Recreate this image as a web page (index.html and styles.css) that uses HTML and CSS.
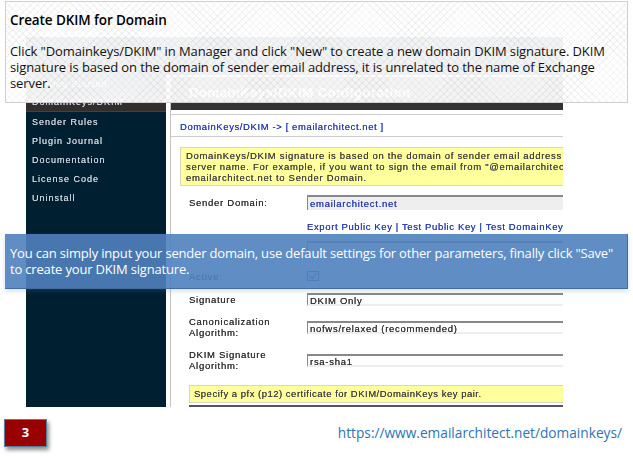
FILE: index.html
```html
<!DOCTYPE html>
<html lang="en">
<head>
<meta charset="utf-8">
<title>Create DKIM for Domain</title>
<link rel="stylesheet" href="styles.css">
</head>
<body>
<div class="stage">
  <div class="shot-wrap">
    <div class="shot">
      <div class="banner"></div>
      <div class="shot-body">
        <nav class="side">
          <div class="side-item side-faint">Getting Started</div>
          <div class="side-item side-active">DomainKeys/DKIM</div>
          <div class="side-item">Sender Rules</div>
          <div class="side-item">Plugin Journal</div>
          <div class="side-item">Documentation</div>
          <div class="side-item">License Code</div>
          <div class="side-item">Uninstall</div>
        </nav>
        <main class="main">
          <div class="head">DomainKeys/DKIM Configuration</div>
          <div class="crumb"><span class="link">DomainKeys/DKIM -&gt; [ emailarchitect.net ]</span></div>
          <div class="panel">
            <div class="note note-top">DomainKeys/DKIM signature is based on the domain of sender email address<br>server name. For example, if you want to sign the email from "@emailarchitect<br>emailarchitect.net to Sender Domain.</div>
            <div class="form-row row-domain">
              <div class="label">Sender Domain:</div>
              <div class="field field-blue">emailarchitect.net</div>
            </div>
            <div class="links link">Export Public Key | Test Public Key | Test DomainKeys</div>
            <div class="form-row row-selector">
              <div class="label"></div>
              <div class="field field-empty"></div>
            </div>
            <div class="form-row row-active">
              <div class="label">Active:</div>
              <svg class="check" viewBox="0 0 12 10" aria-hidden="true"><rect x=".5" y=".5" width="11" height="9" fill="none" stroke="#3f6690"/><path d="M3 5l2.5 2.5L9.5 2" fill="none" stroke="#3f6690" stroke-width="1.2"/></svg>
            </div>
            <div class="form-row row-sig">
              <div class="label">Signature</div>
              <div class="field">DKIM Only</div>
            </div>
            <div class="form-row row-canon">
              <div class="label">Canonicalization<br>Algorithm:</div>
              <div class="field">nofws/relaxed (recommended)</div>
            </div>
            <div class="form-row row-algo">
              <div class="label">DKIM Signature<br>Algorithm:</div>
              <div class="field">rsa-sha1</div>
            </div>
            <div class="note note-bottom">Specify a pfx (p12) certificate for DKIM/DomainKeys key pair.</div>
          </div>
        </main>
      </div>
    </div>
  </div>

  <footer class="foot">
    <div class="badge">3</div>
    <div class="url">https://www.emailarchitect.net/domainkeys/</div>
  </footer>

  <section class="callout callout-top">
    <h1 class="callout-title">Create DKIM for Domain</h1>
    <p class="callout-text">Click "Domainkeys/DKIM" in Manager and click "New" to create a new domain DKIM signature. DKIM signature is based on the domain of sender email address, it is unrelated to the name of Exchange server.</p>
  </section>
  <section class="callout callout-blue">
    <p class="callout-text">You can simply input your sender domain, use default settings for other parameters, finally click "Save" to create your DKIM signature.</p>
  </section>
</div>
</body>
</html>
```
FILE: styles.css
```css
* { box-sizing: border-box; }
html, body { margin: 0; padding: 0; background: #fff; }
.stage {
  position: relative;
  width: 633px;
  height: 456px;
  overflow: hidden;
  font-family: "Open Sans", "Noto Sans", sans-serif;
}

/* embedded screenshot */
.shot-wrap { padding: 37px 70px 0 26px; }
.shot {
  width: 537px;
  height: 370px;
  overflow: hidden;
  font-family: "Liberation Sans", Arial, sans-serif;
  font-size: 9.5px;
  letter-spacing: 0.72px;
  color: #333;
  filter: blur(0.35px);
  text-shadow: 0 0 .5px currentColor;
}
.banner { height: 38px; background: #001f30; }
.shot-body { display: flex; height: 332px; }

.side { width: 140px; flex: none; background: #001f30; color: #c9d3da; font-size: 9px; letter-spacing: 1px; }
.side-item { height: 19px; line-height: 19px; padding-left: 6px; white-space: nowrap; }
.side-faint { height: 18px; line-height: 18px; }
.side-active { margin-bottom: 1px; background: #332e2e; border-bottom: 1px solid #633; }

.main {
  flex: 1;
  min-width: 0;
  margin-left: 4px;
  border-left: 1px solid #c4c4c4;
  display: flex;
  flex-direction: column;
}
.head {
  margin-top: 2px;
  height: 34px;
  background: #333;
  color: #fff;
  font-weight: bold;
  font-size: 13px;
  letter-spacing: 0.6px;
  line-height: 32px;
  padding-left: 18px;
  white-space: nowrap;
}
.crumb {
  margin-top: 4px;
  height: 23px;
  line-height: 23px;
  padding-left: 9px;
  border-top: 1px solid #ccc;
  border-bottom: 1px solid #ccc;
  letter-spacing: 0.6px;
}
.link { color: #2a3fb0; }
.panel { padding: 10px 0 0 9px; display: flex; flex-direction: column; }
.note {
  background: #ffff9e;
  border: 1px solid #d8d8c0;
  color: #444;
}
.note-top { height: 39px; line-height: 11px; padding: 2px 0 0 5px; white-space: nowrap; overflow: hidden; border-right: 0; letter-spacing: 0.68px; }
.form-row { display: flex; padding-left: 9px; }
.label { width: 118px; flex: none; color: #333; line-height: 11px; }
.field {
  flex: 1;
  min-width: 0;
  height: 13px;
  line-height: 11px;
  padding-left: 2px;
  border-top: 2px solid #888;
  border-left: 1px solid #888;
  background: #fff;
  border-bottom: 2px solid #eee;
  color: #333;
}
.field-blue { height: 15px; background: #eee; color: #2a3fb0; padding-top: 1px; border-bottom: 0; }
.row-domain { margin-top: 9px; align-items: center; }
.links { margin-top: 11px; margin-left: 127px; height: 11px; line-height: 11px; white-space: nowrap; overflow: hidden; letter-spacing: 0.62px; }
.row-selector { margin-top: 9px; height: 19px; align-items: flex-start; }
.row-active { margin-top: 10px; height: 12px; align-items: center; }
.check { width: 12px; height: 10px; }
.field-empty { height: 15px; }
.row-sig { margin-top: 11px; align-items: center; }
.row-canon { margin-top: 10px; align-items: center; }
.row-algo { margin-top: 11px; align-items: center; }
.note-bottom { margin: 14px 0 0 9px; height: 18px; line-height: 16px; padding-left: 4px; border-right: 0; white-space: nowrap; letter-spacing: 0.5px; }
.panel::after { content: ""; display: block; height: 2px; margin: 2px 0 0 9px; background: #555; }

/* footer */
.foot {
  display: flex;
  justify-content: space-between;
  align-items: center;
  padding: 12px 11px 0 4px;
}
.badge {
  width: 43px;
  height: 28px;
  background: #990000;
  border: 1px solid #5a7d9c;
  box-shadow: 2px 3px 4px rgba(0, 0, 0, .45);
  color: #fff;
  font-weight: bold;
  font-size: 13px;
  line-height: 25px;
  text-align: center;
}
.url { color: #2d74b5; font-size: 13.7px; line-height: 20px; }

/* overlays */
.callout { position: absolute; left: 5px; width: 623px; margin: 0; }
.callout-text { margin: 0; font-size: 13px; line-height: 16px; }
.callout-top {
  top: 1px;
  height: 102px;
  padding: 10px 4px 0 4px;
  border: 1px solid #d0d0d0;
  color: #111;
  background-color: rgba(255, 255, 255, .95);
  background-image:
    repeating-linear-gradient(45deg, rgba(0,0,0,.045) 0 1px, transparent 1px 5px),
    repeating-linear-gradient(-45deg, rgba(0,0,0,.045) 0 1px, transparent 1px 5px);
}
.callout-top .callout-text { letter-spacing: -0.1px; }
.callout-title { margin: 0 0 15px; font-size: 13.5px; letter-spacing: -0.1px; line-height: 16px; font-weight: 600; color: #000; }
.callout-blue {
  top: 234px;
  height: 55px;
  padding: 11px 4px 0 5px;
  background: rgba(79, 129, 189, .9);
  border-right: 1px solid #3f6f9f;
  border-bottom: 1px solid #3f6f9f;
  box-shadow: 0 2px 5px rgba(79, 129, 189, .25);
  color: #fff;
}
.callout-blue .callout-text { letter-spacing: -0.18px; }
```
